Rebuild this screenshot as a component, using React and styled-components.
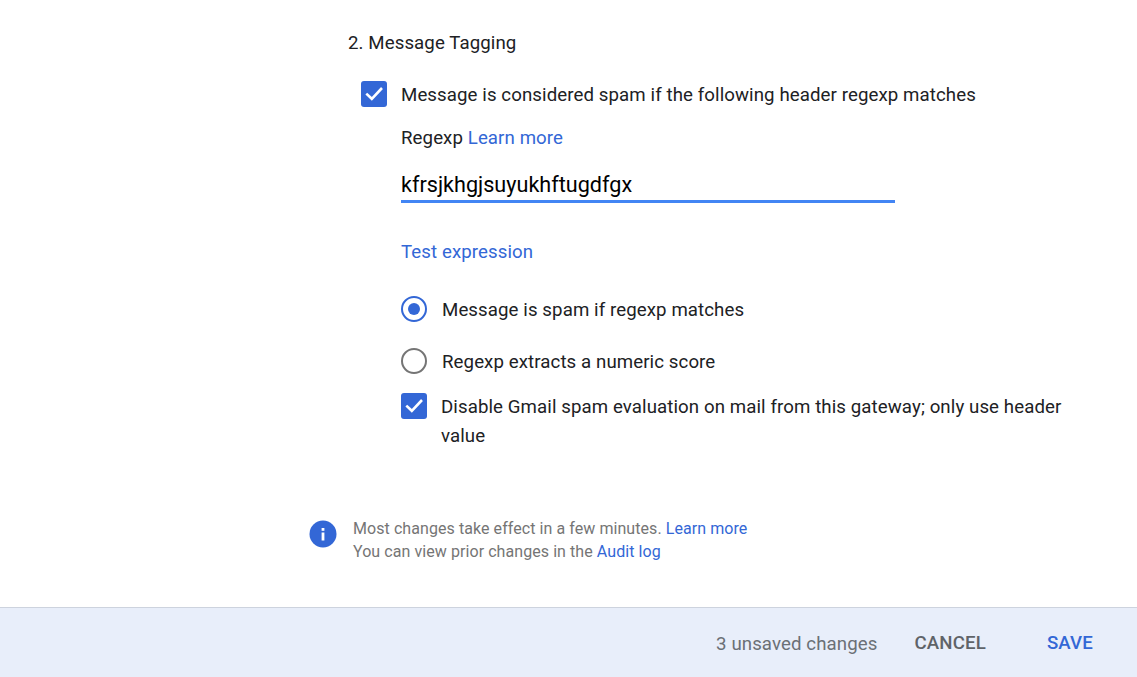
import React from "react";
import styled, { createGlobalStyle } from "styled-components";

const GlobalStyle = createGlobalStyle`
  html, body {
    margin: 0;
    padding: 0;
    background: #fff;
    font-family: Roboto, "Liberation Sans", sans-serif;
    overflow: hidden;
  }
`;

const Page = styled.div`
  width: 1137px;
  height: 677px;
  display: flex;
  flex-direction: column;
`;

const Content = styled.div`
  flex: 1;
  padding: 32px 0 0 348px;
  box-sizing: border-box;
  color: #202124;
  font-size: 18.67px;
  letter-spacing: 0.09px;
  line-height: 22px;
`;

const Heading = styled.div`
  height: 22px;
  margin-bottom: 27px;
`;

const CheckRow = styled.div`
  display: flex;
  align-items: flex-start;
  gap: 14px;
  margin-left: ${({ $indent }) => $indent}px;
  margin-top: ${({ $top }) => $top}px;
  width: ${({ $width }) => $width}px;
`;

const Box = styled.span`
  flex: none;
  width: 26px;
  height: 26px;
  border-radius: 3px;
  background: #3367d6;
  display: flex;
  align-items: center;
  justify-content: center;
`;

const RowLabel = styled.span`
  line-height: 29px;
`;

const Field = styled.div`
  margin-left: 53px;
`;

const RegexpLabel = styled.div`
  margin-top: 17px;
`;

const Link = styled.a`
  color: #3367d6;
  text-decoration: none;
`;

const RegexpInput = styled.div`
  width: 494px;
  height: 30px;
  padding-top: 1px;
  margin-top: 20px;
  border-bottom: 3px solid #4285f4;
  color: #000;
  font-size: 21.6px;
  letter-spacing: 0;
  line-height: 30px;
`;

const TestLink = styled(Link)`
  display: block;
  margin-top: 38px;
`;

const RadioRow = styled.div`
  display: flex;
  align-items: center;
  gap: 15px;
  height: 26px;
  margin-top: ${({ $top }) => $top}px;
`;

const RadioLabel = styled.span`
  padding-top: 2px;
`;

const Radio = styled.span`
  flex: none;
  width: 26px;
  height: 26px;
  box-sizing: border-box;
  border-radius: 50%;
  border: 2px solid ${({ $on }) => ($on ? "#3367d6" : "#757575")};
  display: flex;
  align-items: center;
  justify-content: center;

  &::after {
    content: "";
    width: 12px;
    height: 12px;
    border-radius: 50%;
    background: ${({ $on }) => ($on ? "#3367d6" : "transparent")};
  }
`;

const Notice = styled.div`
  display: flex;
  gap: 16px;
  margin: 66px 0 0 -92px;
  font-size: 16px;
  letter-spacing: 0.07px;
  line-height: 23px;
  color: #757575;
`;

const InfoIcon = styled.svg`
  flex: none;
  width: 28px;
  height: 28px;
  margin-top: 3px;
`;

const Footer = styled.div`
  height: 70px;
  box-sizing: border-box;
  background: #e8eefa;
  border-top: 1px solid #cdd3de;
  display: flex;
  align-items: center;
  justify-content: flex-end;
  padding-right: 44px;
  font-size: 18.67px;
  letter-spacing: 0.09px;
`;

const Unsaved = styled.span`
  color: #6b7076;
  margin-right: 37px;
  padding-top: 2px;
`;

const FooterButton = styled.button`
  border: none;
  background: none;
  padding: 0;
  font: inherit;
  letter-spacing: 0.15px;
  font-weight: 500;
  color: ${({ $primary }) => ($primary ? "#3367d6" : "#5f6368")};
  margin-left: ${({ $left }) => $left}px;
`;

const Tick = () => (
  <svg width="20" height="20" viewBox="0 0 20 20" fill="none">
    <path d="M2.3 9.6 L7.8 14.8 L18 4" stroke="#fff" strokeWidth="2.6" />
  </svg>
);

const App = () => {
  return (
    <Page>
      <GlobalStyle />
      <Content>
        <Heading>2. Message Tagging</Heading>
        <CheckRow $indent={13} $top={0} $width={700}>
          <Box>
            <Tick />
          </Box>
          <RowLabel>Message is considered spam if the following header regexp matches</RowLabel>
        </CheckRow>
        <Field>
          <RegexpLabel>
            Regexp <Link>Learn more</Link>
          </RegexpLabel>
          <RegexpInput>kfrsjkhgjsuyukhftugdfgx</RegexpInput>
          <TestLink>Test expression</TestLink>
          <RadioRow $top={33}>
            <Radio $on />
            <RadioLabel>Message is spam if regexp matches</RadioLabel>
          </RadioRow>
          <RadioRow $top={26}>
            <Radio />
            <RadioLabel>Regexp extracts a numeric score</RadioLabel>
          </RadioRow>
          <CheckRow $indent={0} $top={19} $width={670}>
            <Box>
              <Tick />
            </Box>
            <RowLabel>
              Disable Gmail spam evaluation on mail from this gateway; only use header value
            </RowLabel>
          </CheckRow>
          <Notice>
            <InfoIcon viewBox="0 0 28 28">
              <circle cx="14" cy="14" r="13.5" fill="#3367d6" />
              <rect x="12.6" y="12.5" width="2.8" height="8" fill="#fff" />
              <rect x="12.6" y="8" width="2.8" height="2.8" fill="#fff" />
            </InfoIcon>
            <div>
              Most changes take effect in a few minutes. <Link>Learn more</Link>
              <br />
              You can view prior changes in the <Link>Audit log</Link>
            </div>
          </Notice>
        </Field>
      </Content>
      <Footer>
        <Unsaved>3 unsaved changes</Unsaved>
        <FooterButton>CANCEL</FooterButton>
        <FooterButton $primary $left={61}>
          SAVE
        </FooterButton>
      </Footer>
    </Page>
  );
};

export default App;
